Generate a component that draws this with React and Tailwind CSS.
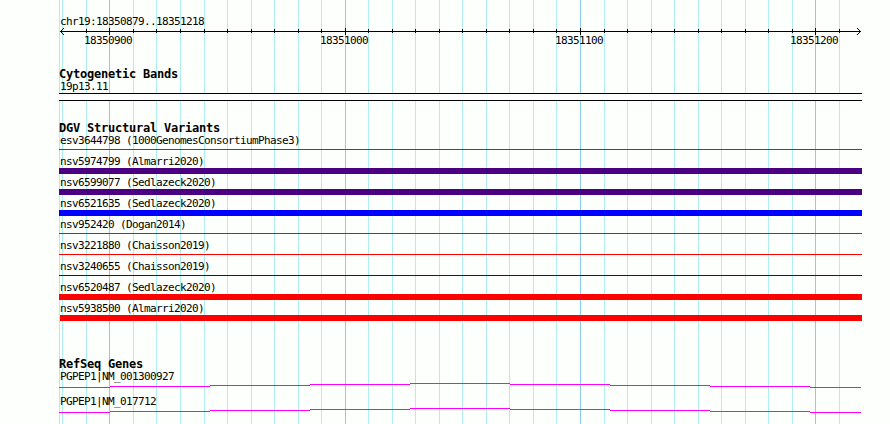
import React from 'react';

const minorLines = [
    59, 62, 86, 133, 156, 180, 204, 227, 251, 274, 298, 321, 368, 392, 415, 439, 462, 486,
    509, 533, 556, 604, 627, 651, 674, 698, 721, 745, 768, 792, 839,
];
const majorLines = [109, 345, 580, 815];

const variants = [
    { id: 'esv3644798', study: '1000GenomesConsortiumPhase3', bar: 'mt-[3px] h-px bg-[#ff0000]' },
    { id: 'nsv5974799', study: 'Almarri2020', bar: 'mt-px h-1.5 bg-[#4b0082]' },
    { id: 'nsv6599077', study: 'Sedlazeck2020', bar: 'mt-px h-1.5 bg-[#4b0082]' },
    { id: 'nsv6521635', study: 'Sedlazeck2020', bar: 'mt-px h-1.5 bg-[#0000ff]' },
    { id: 'nsv952420', study: 'Dogan2014', bar: 'mt-[3px] h-px bg-[#ff0000]' },
    { id: 'nsv3221880', study: 'Chaisson2019', bar: 'mt-[3px] h-px bg-[#ff0000]' },
    { id: 'nsv3240655', study: 'Chaisson2019', bar: 'mt-[3px] h-px bg-[#0000ff]' },
    { id: 'nsv6520487', study: 'Sedlazeck2020', bar: 'mt-px h-1.5 bg-[#ff0000]' },
    { id: 'nsv5938500', study: 'Almarri2020', bar: 'mt-px ml-px h-1.5 bg-[#ff0000]' },
];

const genes = ['PGPEP1|NM_001300927', 'PGPEP1|NM_017712'];

// x, y and width of each step, measured from the left edge of the track
const geneSteps = [
    [0, 4, 51],
    [51, 3, 100],
    [151, 2, 100],
    [251, 1, 100],
    [351, 0, 100],
    [451, 1, 100],
    [551, 2, 100],
    [651, 3, 100],
    [751, 4, 51],
];

const Label = ({ children }) => (
    <div className="h-3 pl-px text-[11px] leading-[14px] tracking-[-0.622px] whitespace-pre">{children}</div>
);

const TrackTitle = ({ children }) => (
    <h2 className="h-3 text-[12px] leading-[13px] font-bold tracking-[-0.224px] whitespace-pre">{children}</h2>
);

const Grid = () => (
    <svg className="absolute inset-0" width="890" height="424" shapeRendering="crispEdges">
        {minorLines.map((x) => (
            <rect key={x} x={x} y="0" width="1" height="424" fill="#afeeee" />
        ))}
        {majorLines.map((x) => (
            <rect key={x} x={x} y="0" width="1" height="424" fill="#87ceeb" />
        ))}
    </svg>
);

const Ruler = () => (
    <svg className="block" width="803" height="7" shapeRendering="crispEdges">
        <rect x="1" y="3" width="801" height="1" />
        {minorLines.slice(2).map((x) => (
            <rect key={x} x={x - 59} y="1" width="1" height="4" />
        ))}
        {majorLines.map((x) => (
            <rect key={x} x={x - 59} y="0" width="1" height="7" />
        ))}
        {[1, 2, 3].map((n) => (
            <g key={n}>
                <rect x={1 + n} y={3 - n} width="1" height="1" />
                <rect x={1 + n} y={3 + n} width="1" height="1" />
                <rect x={801 - n} y={3 - n} width="1" height="1" />
                <rect x={801 - n} y={3 + n} width="1" height="1" />
            </g>
        ))}
    </svg>
);

const App = () => {
    return (
        <div className="relative h-[424px] w-[890px] overflow-hidden bg-[#fdfffc] font-['DejaVu_Sans_Mono',monospace] text-black">
            <Grid />
            <main className="relative ml-[59px] w-[803px] pt-[15px]">
                <section className="h-[53px]">
                    <Label>chr19:18350879..18351218</Label>
                    <div className="mt-px">
                        <Ruler />
                    </div>
                    <div className="-mt-px flex pl-6">
                        <div className="w-[236px]"><Label>18350900</Label></div>
                        <div className="w-[235px]"><Label>18351000</Label></div>
                        <div className="w-[235px]"><Label>18351100</Label></div>
                        <div className="w-12"><Label>18351200</Label></div>
                    </div>
                </section>

                <section className="h-[54px]">
                    <TrackTitle>Cytogenetic Bands</TrackTitle>
                    <Label>19p13.11</Label>
                    <div className="mt-px h-2 border-y border-black bg-white" />
                </section>

                <section className="h-[236px]">
                    <TrackTitle>DGV Structural Variants</TrackTitle>
                    {variants.map((v) => (
                        <div key={v.id} className="flex h-[21px] flex-col">
                            <Label>{`${v.id} (${v.study})`}</Label>
                            <div className={v.bar} />
                        </div>
                    ))}
                </section>

                <section>
                    <TrackTitle>RefSeq Genes</TrackTitle>
                    {genes.map((gene) => (
                        <div key={gene} className="h-[25px]">
                            <Label>{gene}</Label>
                            <svg className="mt-px block" width="803" height="5" shapeRendering="crispEdges">
                                {geneSteps.map(([x, y, width]) => (
                                    <rect key={x} x={x} y={y} width={width} height="1" fill="#ff00ff" />
                                ))}
                            </svg>
                        </div>
                    ))}
                </section>
            </main>
        </div>
    );
};

export default App;
